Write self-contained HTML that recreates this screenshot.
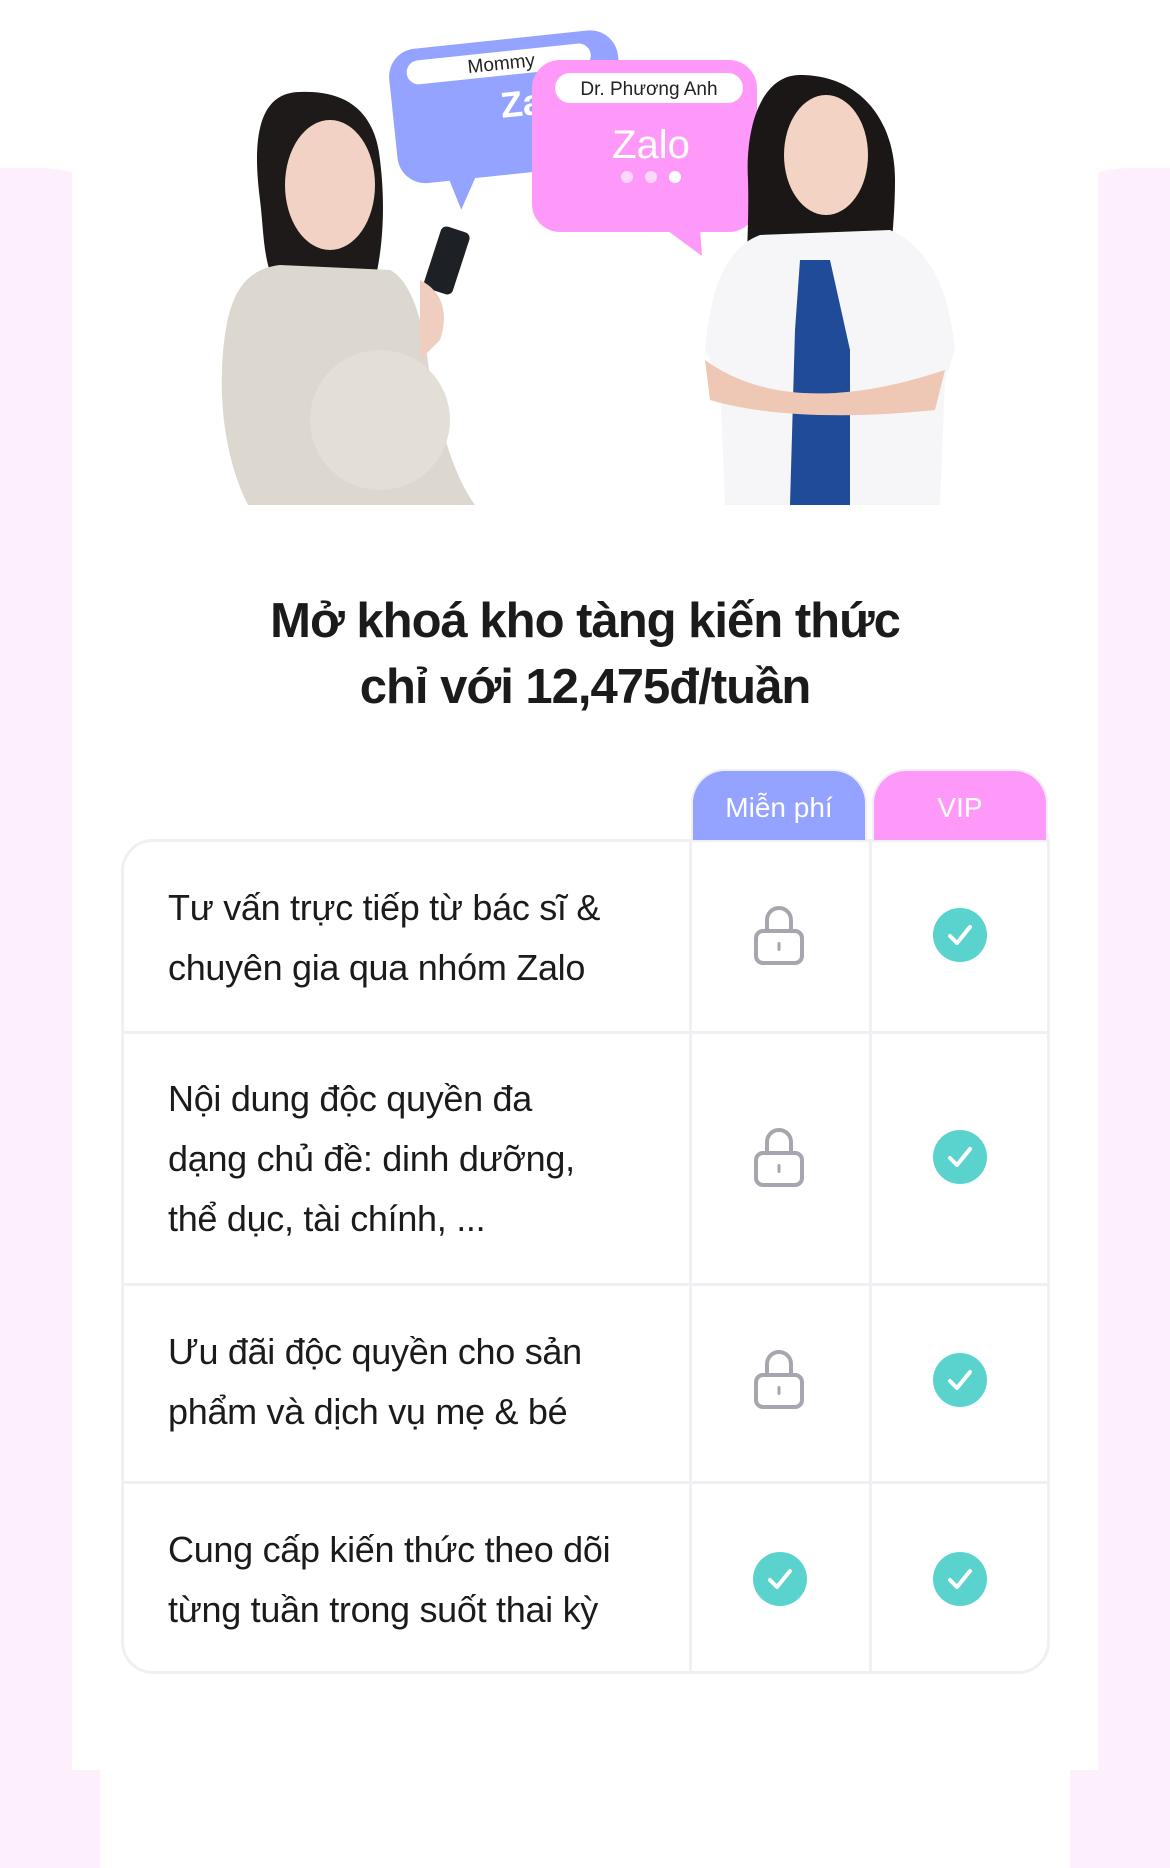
<!DOCTYPE html>
<html><head><meta charset="utf-8"><style>
*{margin:0;padding:0;box-sizing:border-box}
body{width:1170px;height:1770px;background:#fff;position:relative;overflow:hidden;font-family:"Liberation Sans","DejaVu Sans",sans-serif;color:#1b1b1b}
.side{position:absolute;top:168px;width:100px;height:1700px;background:#fdf0fc}
.panel{position:absolute;left:72px;top:0;width:1026px;height:1770px;background:#fff}
h1{position:absolute;left:0;width:1170px;top:588px;text-align:center;font-size:49px;line-height:66px;font-weight:bold;letter-spacing:-1px}
.tab{position:absolute;top:769px;width:176px;height:71px;border-radius:34px 34px 0 0;color:#fff;font-size:28px;text-align:center;line-height:74px;border:2px solid #f1eef7;border-bottom:none}
.tbl{position:absolute;left:121px;top:839px;width:929px;height:835px;border:3px solid #f0eff4;border-radius:32px;border-top-right-radius:0}
.hl{position:absolute;left:121px;width:929px;height:3px;background:#f0eff4}
.vl{position:absolute;top:839px;height:835px;width:3px;background:#f0eff4}
.txt{position:absolute;left:168px;font-size:36px;line-height:60px;letter-spacing:-0.3px}
.ic{position:absolute;width:54px;height:54px}
.lk{position:absolute;width:54px;height:62px}
</style></head><body>
<div class="side" style="left:0;border-top-right-radius:60px 30px"></div>
<div class="side" style="right:0;border-top-left-radius:60px 30px"></div>
<div class="panel"></div>
<svg style="position:absolute;left:0;top:0" width="1170" height="510">
 <g transform="rotate(-6 500 100)">
  <rect x="392" y="40" width="230" height="135" rx="28" fill="#94a3ff"/>
  <path d="M440 170 L450 205 L470 170Z" fill="#94a3ff"/>
  <rect x="410" y="52" width="185" height="24" rx="12" fill="#fff"/>
  <text x="505" y="70" font-size="19" text-anchor="middle" fill="#222" font-family="Liberation Sans">Mommy</text>
  <text x="500" y="118" font-size="36" font-weight="bold" fill="#fff" font-family="Liberation Sans">Zalo</text>
 </g>
 <rect x="532" y="60" width="225" height="172" rx="28" fill="#ff99f9"/>
 <path d="M660 225 L700 228 L702 256Z" fill="#ff99f9"/>
 <rect x="555" y="73" width="188" height="30" rx="15" fill="#fff"/>
 <text x="649" y="95" font-size="19" text-anchor="middle" fill="#222" font-family="Liberation Sans">Dr. Phương Anh</text>
 <text x="651" y="158" font-size="40" text-anchor="middle" fill="#fff" font-family="Liberation Sans">Zalo</text>
 <circle cx="627" cy="177" r="6" fill="#fbd7f9"/><circle cx="651" cy="177" r="6" fill="#fbd7f9"/><circle cx="675" cy="177" r="6" fill="#fff"/>
 <path d="M300 92 C250 92 255 160 260 200 C265 240 262 280 290 300 L370 300 C385 250 385 200 380 160 C375 110 345 90 300 92Z" fill="#1e1a1a"/>
 <ellipse cx="330" cy="185" rx="45" ry="65" fill="#f1d2c4"/>
 <path d="M280 265 C240 270 225 300 222 370 C220 420 230 470 248 505 L475 505 C450 470 440 420 430 380 C425 320 410 280 390 270 Z" fill="#dcd7cf"/>
 <ellipse cx="380" cy="420" rx="70" ry="70" fill="#e3ded6"/>
 <rect x="432" y="228" width="30" height="65" rx="6" fill="#1d2024" transform="rotate(18 447 260)"/>
 <path d="M420 280 C440 290 450 310 440 340 L420 360 Z" fill="#efcdbf"/>
 <path d="M800 75 C760 75 745 130 748 180 C750 250 740 330 745 400 L870 400 C880 330 895 250 895 180 C895 120 860 75 800 75Z" fill="#1c1717"/>
 <ellipse cx="826" cy="155" rx="42" ry="60" fill="#f3d3c3"/>
 <path d="M760 235 C720 250 710 300 705 350 L720 380 L725 505 L940 505 L945 380 L955 350 C950 300 935 250 890 230 Z" fill="#f6f6f8"/>
 <path d="M800 260 L830 260 L850 350 L850 505 L790 505 L795 330 Z" fill="#1f4b99"/>
 <path d="M705 360 C760 400 840 405 945 370 L935 410 C840 420 760 415 710 400Z" fill="#efc7b5"/>
</svg>
<h1>Mở khoá kho tàng kiến thức<br>chỉ với 12,475đ/tuần</h1>
<div class="tbl"></div>
<div class="tab" style="left:691px;background:#94a3ff">Miễn phí</div>
<div class="tab" style="left:872px;background:#ff99f9">VIP</div>
<div class="hl" style="top:1031px"></div>
<div class="hl" style="top:1283px"></div>
<div class="hl" style="top:1481px"></div>
<div class="vl" style="left:689px"></div>
<div class="vl" style="left:869px"></div>
<div class="txt" style="top:878px">Tư vấn trực tiếp từ bác sĩ &amp;<br>chuyên gia qua nhóm Zalo</div>
<div class="txt" style="top:1069px">Nội dung độc quyền đa<br>dạng chủ đề: dinh dưỡng,<br>thể dục, tài chính, ...</div>
<div class="txt" style="top:1322px">Ưu đãi độc quyền cho sản<br>phẩm và dịch vụ mẹ &amp; bé</div>
<div class="txt" style="top:1520px">Cung cấp kiến thức theo dõi<br>từng tuần trong suốt thai kỳ</div>
<svg class="lk" style="left:752px;top:904px" viewBox="0 0 54 62"><path d="M15 28 V16 a12 12 0 0 1 24 0 V28" fill="none" stroke="#a6a6ae" stroke-width="4"/><rect x="4" y="27" width="46" height="32" rx="7" fill="none" stroke="#a6a6ae" stroke-width="4"/><rect x="25.5" y="38" width="3" height="9" rx="1.5" fill="#a6a6ae"/></svg>
<svg class="lk" style="left:752px;top:1126px" viewBox="0 0 54 62"><path d="M15 28 V16 a12 12 0 0 1 24 0 V28" fill="none" stroke="#a6a6ae" stroke-width="4"/><rect x="4" y="27" width="46" height="32" rx="7" fill="none" stroke="#a6a6ae" stroke-width="4"/><rect x="25.5" y="38" width="3" height="9" rx="1.5" fill="#a6a6ae"/></svg>
<svg class="lk" style="left:752px;top:1348px" viewBox="0 0 54 62"><path d="M15 28 V16 a12 12 0 0 1 24 0 V28" fill="none" stroke="#a6a6ae" stroke-width="4"/><rect x="4" y="27" width="46" height="32" rx="7" fill="none" stroke="#a6a6ae" stroke-width="4"/><rect x="25.5" y="38" width="3" height="9" rx="1.5" fill="#a6a6ae"/></svg>
<svg class="ic" style="left:933px;top:908px" viewBox="0 0 54 54"><circle cx="27" cy="27" r="27" fill="#5ad3cf"/><path d="M17 28 L24 35 L37 19" fill="none" stroke="#fff" stroke-width="4" stroke-linecap="round" stroke-linejoin="round"/></svg>
<svg class="ic" style="left:933px;top:1130px" viewBox="0 0 54 54"><circle cx="27" cy="27" r="27" fill="#5ad3cf"/><path d="M17 28 L24 35 L37 19" fill="none" stroke="#fff" stroke-width="4" stroke-linecap="round" stroke-linejoin="round"/></svg>
<svg class="ic" style="left:933px;top:1353px" viewBox="0 0 54 54"><circle cx="27" cy="27" r="27" fill="#5ad3cf"/><path d="M17 28 L24 35 L37 19" fill="none" stroke="#fff" stroke-width="4" stroke-linecap="round" stroke-linejoin="round"/></svg>
<svg class="ic" style="left:753px;top:1552px" viewBox="0 0 54 54"><circle cx="27" cy="27" r="27" fill="#5ad3cf"/><path d="M17 28 L24 35 L37 19" fill="none" stroke="#fff" stroke-width="4" stroke-linecap="round" stroke-linejoin="round"/></svg>
<svg class="ic" style="left:933px;top:1552px" viewBox="0 0 54 54"><circle cx="27" cy="27" r="27" fill="#5ad3cf"/><path d="M17 28 L24 35 L37 19" fill="none" stroke="#fff" stroke-width="4" stroke-linecap="round" stroke-linejoin="round"/></svg>
</body></html>
